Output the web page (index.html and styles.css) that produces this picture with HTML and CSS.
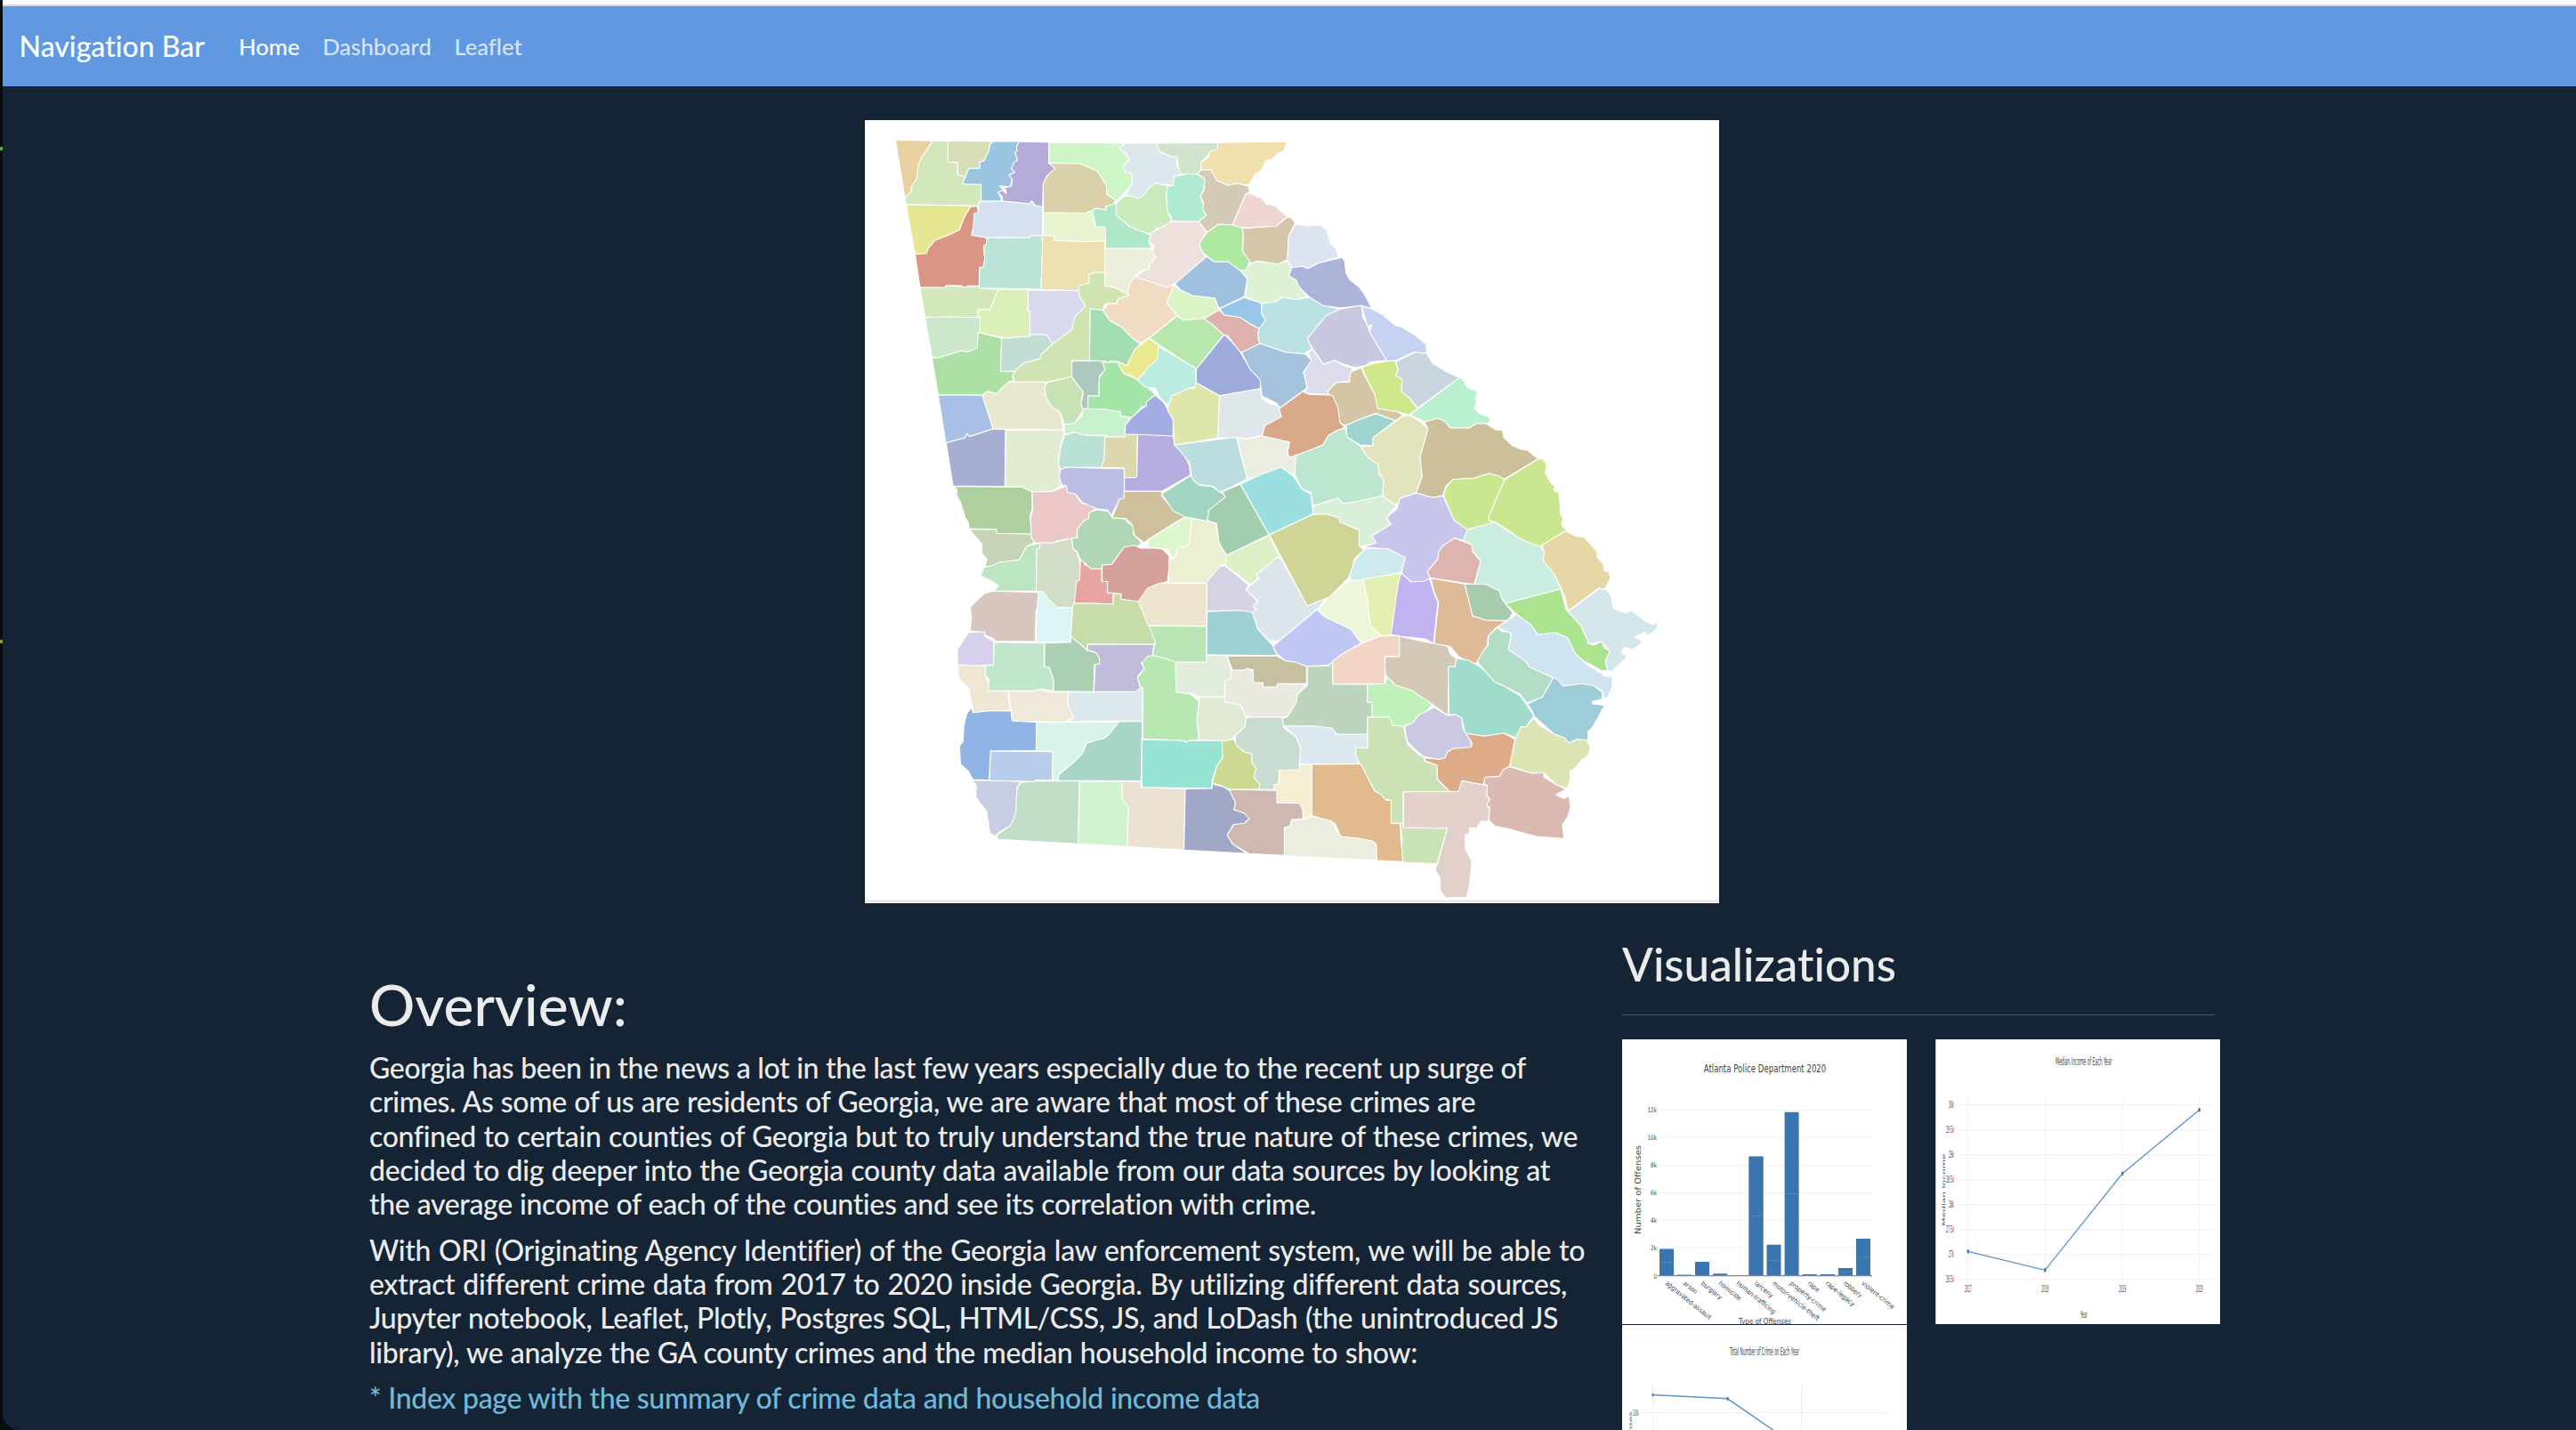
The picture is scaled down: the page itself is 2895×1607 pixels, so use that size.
FILE: index.html
```html
<!DOCTYPE html>
<html lang="en">
<head>
<meta charset="utf-8">
<title>Georgia Crime Data</title>
<link rel="stylesheet" href="styles.css">
</head>
<body>
<div class="edge"><i class="mark mark-a"></i><i class="mark mark-b"></i></div>
<div class="page">
<nav class="navbar">
  <a class="brand">Navigation Bar</a>
  <a class="nav-link active">Home</a>
  <a class="nav-link">Dashboard</a>
  <a class="nav-link">Leaflet</a>
</nav>
<figure class="map">
<svg width="960" height="880" viewBox="972 135 960 880" role="img" aria-label="Counties of Georgia">
<path d="M972 1012.5H1932" stroke="#dcdcdc" stroke-width="1.4"/>
<g class="counties">
<g transform="translate(970 130) scale(.33333)">
<path fill="#e8d09f" d="M109 82 235 85 198 140 187 165 185 205 175 230 163 240 163 255 141 277z"/>
<path fill="#d2e8bc" d="M235 85 286 85 286 156 319 158 319 199 345 201 335 230 397 232 397 288 391 290 391 304 235 301 145 299 141 277 163 255 163 240 181 212 186 165 198 140z"/>
<path fill="#d5deb4" d="M286 85 439 87 428 96 424 120 416 133 409 152 394 155 393 178 357 178 345 206 319 199 319 158 286 156z"/>
<path fill="#9ac4df" d="M439 87 526 87 517 105 520 120 512 125 521 152 508 165 512 190 492 200 502 212 497 240 460 237 483 262 455 258 470 288 398 288 398 232 335 230 357 178 393 178 394 155 409 152 416 133 424 120 428 96z"/>
<path fill="#b4abd9" d="M526 87 627 90 626 158 647 178 632 198 620 203 607 230 605 308 580 302 570 288 562 298 530 294 470 288 470 275 455 258 470 252 483 262 480 248 460 237 480 242 500 238 503 215 492 200 512 190 500 180 508 158 521 150 512 125 520 118 517 105z"/>
<path fill="#cef5c6" d="M627 90 886 93 864 110 890 132 898 150 882 160 878 175 884 192 907 194 906 230 852 292 822 265 820 235 792 190 775 180 732 162 626 158z"/>
<path fill="#dad1ab" d="M626 160 732 162 775 180 792 190 820 235 822 265 850 285 845 300 818 306 818 318 785 312 772 322 758 324 755 329 608 327 607 230 620 203 647 178z"/>
<path fill="#dde8ec" d="M886 93 987 93 1002 122 1045 140 1057 135 1058 165 1072 190 1072 197 1050 205 1045 235 987 228 963 245 957 262 940 275 920 280 905 270 880 278 906 230 907 194 884 192 878 168 898 150 890 132 864 110z"/>
<path fill="#c9ebbb" d="M853 295 880 272 905 270 925 280 945 270 963 243 987 228 1030 236 1022 265 1024 300 1030 335 1040 350 1035 362 1010 380 990 378 970 402 900 375 853 335z"/>
<path fill="#afe8c8" d="M772 320 785 312 818 318 820 305 853 295 853 335 900 375 970 402 963 428 975 447 817 448 817 376 785 375z"/>
<path fill="#e8f4cf" d="M608 328 758 328 758 323 770 322 785 375 817 376 817 422 745 425 643 420 643 404 606 404z"/>
<path fill="#d6e1f0" d="M391 290 470 288 530 294 562 298 567 287 580 304 605 308 605 404 563 404 563 411 445 410 440 414 415 411 365 403 372 375 363 372 374 362 374 330 388 325z"/>
<path fill="#e6e793" d="M145 300 363 304 335 355 325 385 290 402 243 420 218 450 213 465 175 466z"/>
<path fill="#da9584" d="M363 306 385 306 388 326 374 330 372 370 365 403 417 412 415 435 407 437 410 485 405 510 393 512 391 574 350 574 350 579 335 579 333 573 280 572 277 579 192 579 175 467 213 465 218 450 243 420 290 402 325 385 340 345z"/>
<path fill="#bbe4d8" d="M417 412 563 411 563 404 603 404 605 436 600 585 391 581 393 512 405 510 410 485 407 437 415 435z"/>
<path fill="#ebe0b1" d="M603 404 643 404 643 420 745 425 815 422 815 529 778 529 775 536 761 538 761 565 728 573 727 590 600 586 605 436z"/>
<path fill="#ecefdb" d="M815 448 975 450 980 465 993 480 975 495 970 515 935 525 918 540 900 565 892 604 850 580 815 574z"/>
<path fill="#d3e9bd" d="M192 580 277 579 280 572 350 578 391 574 391 582 456 586 428 654 388 653 388 680 302 679 209 680z"/>
<path fill="#dbefb8" d="M456 586 556 585 556 658 563 660 562 744 480 750 394 731 394 680 388 680 388 653 428 654z"/>
<path fill="#d8d9ec" d="M556 588 727 590 728 605 750 642 713 680 713 698 703 722 638 770 618 738 563 738 563 660 556 658z"/>
<path fill="#d0e4b2" d="M727 573 761 565 761 538 778 529 815 529 815 574 850 580 897 607 860 618 855 632 815 635 808 656 766 650 763 825 704 825 704 880 620 898 490 898 508 893 503 865 540 835 597 818 600 805 638 770 703 722 713 680 750 642 728 605z"/>
<path fill="#cbe8cb" d="M209 680 302 679 394 680 394 731 388 731 385 783 350 797 335 792 255 816 232 815z"/>
<path fill="#ade0a5" d="M232 817 255 816 335 792 350 797 385 783 388 731 467 750 463 862 510 862 503 880 508 893 490 898 465 928 450 938 420 928 402 942 253 940z"/>
<path fill="#c1ddd4" d="M467 750 480 750 562 744 563 738 618 738 638 770 600 805 597 818 540 835 510 862 463 862z"/>
<path fill="#f0dcc2" d="M918 542 1024 578 1050 568 1024 630 1058 675 965 748 935 768 910 752 870 712 830 690 808 660 825 632 855 635 860 618 897 605 892 590 900 562z"/>
<path fill="#a3deb0" d="M766 650 808 656 830 690 870 712 910 752 935 768 915 790 890 842 855 828 830 828 825 835 817 827 763 825z"/>
<path fill="#ebe990" d="M963 752 997 775 993 820 960 852 925 890 905 875 880 870 855 830 890 842 915 790 925 780z"/>
</g>
<g transform="translate(970 420) scale(.33333)">
<path fill="#acc8be" d="M704-43 805-43 817-15 795 10 808 15 795 20 795 75 758 75 758 118 740 118 735 100 742 65 725 40 704 12z"/>
<path fill="#a2e5a6" d="M795 75 758 75 758 118 815 120 865 128 870 142 905 148 930 125 938 112 965 105 967 90 985 70 950 38 925 20 880 0 855-40 825-37 805-40 817-15 797 10z"/>
<path fill="#e6a5a0" d="M732 640 735 625 745 630 747 645 768 648 768 657 804 659 804 700 824 701 824 738 843 740 843 776 710 772 708 737 720 700z"/>
<path fill="#d8c7c0" d="M410 740 440 733 592 737 590 785 583 800 580 902 445 902 440 893 410 880 390 870 360 866 365 830 362 785z"/>
<path fill="#dcf6f6" d="M592 735 608 735 655 788 707 790 697 903 583 905 585 800z"/>
<path fill="#c7dca8" d="M708 773 843 776 845 740 870 742 870 760 928 768 955 820 970 850 985 890 985 913 757 912 755 932 700 885z"/>
<path fill="#d1ddc6" d="M597 570 640 570 703 555 708 590 720 600 732 640 730 695 720 700 712 770 706 788 655 788 625 760 608 735 583 733 585 590 595 588z"/>
<path fill="#bce6c1" d="M597 570 595 588 585 590 583 733 440 733 457 715 430 697 395 680 408 653 450 635 525 628 550 582z"/>
<path fill="#c6d3b6" d="M357 524 450 525 450 538 567 540 568 552 578 570 550 582 535 612 525 628 460 635 425 650 410 648 418 625 400 605 400 573z"/>
<path fill="#add09e" d="M303 380 535 382 570 397 570 455 563 480 567 540 450 538 450 525 357 522 355 500 345 487 335 455 328 432 315 410 317 390z"/>
<path fill="#ecc9c8" d="M570 398 640 396 685 378 690 400 715 405 735 435 790 453 762 470 760 488 745 495 722 525 720 553 660 562 640 570 578 570 567 550 565 480 572 460z"/>
<path fill="#b1d6b5" d="M790 458 830 465 840 485 885 490 890 500 912 515 910 540 940 570 925 582 880 585 838 643 806 645 804 658 768 657 732 625 722 600 708 590 703 555 722 553 722 525 745 495 760 488 762 468z"/>
<path fill="#d6a09b" d="M880 585 915 578 935 588 985 588 1010 592 1032 615 1032 645 1027 700 1000 708 985 718 928 768 870 760 870 742 824 738 824 701 806 700 806 645 838 643z"/>
<path fill="#a8c0e6" d="M253 71 402 73 438 185 355 212 350 202 345 215 279 233z"/>
<path fill="#a7aed3" d="M280 233 345 215 350 202 358 212 440 185 480 188 478 380 303 378z"/>
<path fill="#e8e8cf" d="M402 73 420 60 450 68 465 50 490 28 613 28 620 40 613 75 635 110 665 130 675 190 480 187 438 185z"/>
<path fill="#c7e2b4" d="M620 30 704 10 725 40 742 60 735 95 740 125 712 168 678 170 665 130 635 110 617 80 612 50z"/>
<path fill="#c7f0cd" d="M740 118 815 120 867 128 870 145 900 150 883 175 883 213 825 213 820 207 745 207 715 197 680 205 678 172 712 168 738 140z"/>
<path fill="#e2ecd2" d="M482 190 675 190 678 205 668 230 658 295 665 325 672 375 638 396 570 398 535 382 478 380z"/>
<path fill="#bbe0d4" d="M680 207 715 197 745 207 815 210 813 290 802 315 680 316 667 325 658 300 668 240z"/>
<path fill="#dcd7ac" d="M815 212 883 213 883 204 925 204 923 345 917 350 881 350 881 318 802 316 813 290z"/>
<path fill="#bbbde3" d="M665 325 682 316 880 320 880 420 865 422 837 478 825 460 790 455 740 435 715 405 690 400 685 378 670 375 662 350z"/>
<path fill="#b5ade0" d="M926 204 1030 203 1045 210 1050 240 1085 275 1100 310 1103 342 1007 397 881 396 881 350 917 350 923 345z"/>
<path fill="#cec09b" d="M881 397 1007 397 1007 412 1050 462 1085 482 1030 515 960 560 947 570 915 545 908 510 885 488 840 485 865 422 880 420z"/>
</g>
<g transform="translate(1290 130) scale(.33333)">
<path fill="#eee0dc" d="M40 380 80 357 172 357 198 393 175 430 180 452 195 477 92 566 64 578-42 543-20 526 5 515 5 500 27 480 15 460 20 440 5 420 10 395z"/>
<path fill="#d0e4cb" d="M27 93 235 91 235 115 210 120 205 132 180 155 178 185 165 197 112 197 105 183 97 135 85 140 42 122z"/>
<path fill="#efe0ad" d="M235 91 470 87 458 120 442 125 420 145 398 152 383 183 360 200 350 220 337 235 300 228 270 235 232 218 205 182 178 182 180 158 205 140 210 120 235 115z"/>
<path fill="#b0ead0" d="M90 205 135 196 165 197 192 213 188 250 177 272 188 300 185 315 197 335 172 357 80 355 80 340 66 325 64 240 85 235z"/>
<path fill="#d4cbb6" d="M168 196 180 183 212 183 232 218 270 235 300 228 340 238 343 258 330 265 285 368 238 366 200 393 172 357 197 335 185 315 188 295 177 272 190 250 192 213z"/>
<path fill="#f0d6d3" d="M343 262 385 280 400 298 435 305 440 315 470 340 432 373 315 378 285 370 330 265z"/>
<path fill="#afe8a0" d="M200 393 238 366 285 368 315 378 322 395 318 455 345 490 330 520 312 523 272 493 225 493 185 462 173 432z"/>
<path fill="#d4c6a8" d="M318 380 432 373 470 342 485 345 497 362 475 405 470 487 437 500 370 490 348 498 320 458 322 395z"/>
<path fill="#dce3f1" d="M497 365 540 372 582 368 603 385 615 430 635 450 643 478 575 497 540 515 520 508 485 512 470 487 475 405z"/>
<path fill="#aab5d9" d="M485 512 520 508 540 515 575 497 655 478 664 490 668 530 680 552 715 580 735 610 755 650 720 640 650 648 590 640 545 612 510 578 500 555 475 540z"/>
<path fill="#ddf1d5" d="M312 523 330 520 348 498 370 490 437 500 470 488 485 512 475 540 500 555 510 578 535 608 500 620 455 612 430 628 385 632 325 610 335 570 333 545z"/>
<path fill="#a0c0df" d="M92 566 198 475 225 493 272 493 312 523 335 550 325 610 240 650 225 615 150 607 110 588z"/>
<path fill="#dbf4c3" d="M88 570 110 588 150 607 225 615 240 655 190 684 120 690 98 672 64 630z"/>
<path fill="#98c6e8" d="M242 650 325 613 383 632 383 665 397 690 375 718 345 702 310 680 258 672z"/>
<path fill="#deb0ae" d="M240 655 258 672 310 680 345 702 375 718 370 740 377 768 345 790 312 798 290 770 270 742 245 737 215 702 188 686z"/>
<path fill="#b7e7ad" d="M98 675 120 690 188 684 215 702 255 738 163 855 125 830 5 750z"/>
<path fill="#bae1e4" d="M385 634 430 628 455 612 500 620 545 612 590 640 648 652 600 675 572 710 538 752 555 785 525 803 465 798 378 768 370 740 375 718 397 690 383 665z"/>
<path fill="#c9c8e1" d="M648 652 720 640 725 680 740 705 748 730 805 825 750 830 740 840 700 850 660 838 630 825 592 838 555 785 538 752 572 710 600 675z"/>
<path fill="#c6d2f1" d="M722 643 755 652 790 670 835 708 855 712 900 740 938 770 940 800 895 798 830 828 805 825 748 730 755 705 740 710z"/>
<path fill="#bcebe0" d="M35 777 125 830 160 850 163 912 135 920 80 948 80 965 68 978 40 950 25 918-8 915-35 893 0 850 33 820z"/>
<path fill="#9eaad9" d="M258 738 290 770 312 798 345 855 382 890 378 920 242 944 163 900 163 855z"/>
<path fill="#a5c2dc" d="M316 798 378 768 465 798 530 803 552 825 525 865 537 918 443 986 435 970 385 945 378 890 345 855z"/>
<path fill="#dcdcec" d="M555 787 592 838 630 825 665 845 690 850 680 893 635 900 605 940 530 935 537 915 525 865 552 825 540 800z"/>
<path fill="#cee88b" d="M722 850 760 835 830 825 845 855 835 875 858 890 855 925 880 950 910 988 880 1008 840 998 775 990 765 940 740 890z"/>
<path fill="#c8d5df" d="M835 830 900 798 940 802 960 835 1010 865 1050 883 910 985 880 950 855 930 858 890 835 875 845 855z"/>
</g>
<g transform="translate(1290 420) scale(.33333)">
<path fill="#d4c5a5" d="M720-20 728 0 765 70 775 118 840 128 860 140 835 158 768 133 710 155 665 175 648 165 640 110 605 60 635 30 680 28 683-5z"/>
<path fill="#a4ade2" d="M-5 95 25 72 55 98 70 125 85 155 85 210-77 203-75 172-55 148-20 118-5 108z"/>
<path fill="#dfe6ac" d="M163 30 242 74 236 217 90 240 85 155 65 120 80 75 135 50 160 48z"/>
<path fill="#e0e7eb" d="M242 74 378 50 385 85 410 100 443 110 450 145 395 175 385 210 330 218 236 215z"/>
<path fill="#d9a88a" d="M522 60 545 70 622 73 640 110 648 165 665 180 610 207 590 240 520 270 478 283 470 265 475 230 385 210 395 175 450 145 443 118z"/>
<path fill="#bcdddf" d="M92 240 298 214 335 355 245 400 220 380 165 372 150 355 140 300z"/>
<path fill="#ecede1" d="M300 214 340 220 385 210 478 230 470 270 478 283 503 272 500 320 490 340 450 318 385 340 335 355z"/>
<path fill="#a0d5cf" d="M668 175 710 155 768 135 835 158 760 215 758 243 715 240 672 213z"/>
<path fill="#e3e4bd" d="M862 142 885 142 920 162 945 185 918 280 925 345 905 402 855 418 850 440 820 438 792 412 795 360 778 330 775 305 745 285 718 247 760 243 760 215z"/>
<path fill="#bce6d0" d="M665 183 672 213 715 243 745 285 775 305 780 340 795 360 790 412 710 430 660 438 640 420 557 445 550 400 520 390 495 340 500 275 545 258 590 240 610 207 640 190z"/>
<path fill="#9bdfe0" d="M312 372 385 338 450 315 490 345 520 390 550 405 557 473 408 543z"/>
<path fill="#a1d4c1" d="M47 405 145 343 155 360 175 376 215 380 245 400 262 410 250 430 205 460 200 497 125 482 85 462z"/>
<path fill="#a2cdae" d="M250 398 312 373 408 543 265 612 240 570 232 505 202 495 205 460 262 415z"/>
<path fill="#dcf6cd" d="M125 484 148 487 140 575 118 590 98 592 95 615 80 618 70 592 0 585 0 560z"/>
<path fill="#ecefd0" d="M148 487 228 503 240 570 265 612 268 640 245 648 198 705 70 704 72 630 97 615 97 592 140 575z"/>
<path fill="#daefd9" d="M557 447 640 420 660 438 710 430 792 412 838 445 805 485 822 508 755 545 770 572 712 583 712 525 645 500 640 485 605 473 557 473z"/>
<path fill="#d0d497" d="M410 543 555 475 605 473 645 487 648 500 712 527 712 578 728 595 695 625 690 660 675 690 610 755 537 783z"/>
<path fill="#ddf0c6" d="M265 612 408 545 445 617 365 678 372 690 345 710 262 648z"/>
<path fill="#cdebef" d="M735 588 810 590 868 620 855 670 725 695 685 697 680 680 700 625z"/>
<path fill="#d5d2e4" d="M198 702 245 648 262 648 340 712 330 728 370 768 355 782 365 798 350 808 310 798 198 800z"/>
<path fill="#dce6ea" d="M437 618 450 625 537 783 605 755 570 795 445 900 410 900 370 860 352 805 365 795 355 782 372 768 330 728 375 690 365 678z"/>
<path fill="#e4f0b2" d="M725 693 855 671 820 880 790 885 750 850 735 740z"/>
<path fill="#ebf6da" d="M575 793 610 755 680 697 725 697 740 760 750 850 785 883 725 908 705 890 685 862 640 840 600 822z"/>
<path fill="#c1b3ef" d="M855 671 885 700 950 690 965 740 978 770 963 910 940 895 850 885 820 880 845 700z"/>
<path fill="#ece4cd" d="M40 706 198 706 198 850 0 848-10 820-32 768 0 722z"/>
<path fill="#b9e4b6" d="M5 850 197 852 197 973 93 973 65 962 15 950 25 905z"/>
</g>
<g transform="translate(1600 420) scale(.33333)">
<path fill="#b9f0d0" d="M120 13 135 22 145 45 182 60 175 80 178 100 170 115 190 135 220 145 225 160 215 168 180 168 152 183 90 183 70 160 48 150 2 162-45 138z"/>
<path fill="#ccc09a" d="M2 163 48 150 70 160 90 183 152 183 180 168 210 168 245 190 265 190 270 215 300 243 330 255 350 258 385 287 272 355 220 336 170 352 100 356 75 378 65 410 30 418-25 402-5 345-12 280 15 185z"/>
<path fill="#c9e78e" d="M387 287 400 287 415 305 410 335 430 370 442 378 440 395 455 400 460 440 460 470 470 490 465 508 480 528 400 577 395 583 360 572 320 553 290 530 240 500 220 495 220 480 272 358z"/>
<path fill="#c9e78e" d="M272 356 250 343 220 336 170 352 100 356 78 378 67 410 103 495 145 526 240 502 220 495 220 480z"/>
<path fill="#e5d7a6" d="M400 577 480 530 515 548 540 550 585 600 585 620 605 640 610 665 625 668 630 690 610 725 590 723 487 800 475 750 455 705 402 630 407 605z"/>
<path fill="#c9eee0" d="M147 526 240 500 260 515 320 553 360 572 395 583 407 605 402 630 440 675 462 725 275 774 262 755 250 730 210 710 172 710 192 632 160 590 162 577 133 562z"/>
<path fill="#deb4af" d="M105 554 162 577 165 600 192 632 170 710 22 688 12 668 47 625 50 600 68 577z"/>
<path fill="#c9c6ed" d="M-80 420-25 402 30 418 65 412 103 495 147 526 133 562 105 554 68 577 50 600 47 625 12 668 22 690 0 700-42 702-75 672-62 620-120 590-205 585-160 570-175 547-110 508-125 485-90 455z"/>
<path fill="#a6ccad" d="M138 709 210 710 255 732 262 755 275 775 300 805 285 832 210 831 165 817z"/>
<path fill="#dfba99" d="M25 690 138 709 165 817 210 831 280 834 245 855 217 885 215 915 195 945 180 975 165 978 120 955 90 920 35 910 50 770 35 735z"/>
<path fill="#d3e6ea" d="M487 802 592 724 618 728 633 750 638 790 680 807 700 798 745 833 775 845 788 836 788 858 760 882 745 872 712 887 740 905 705 930 675 922 668 940 685 955 635 1005 620 1000 612 970 627 935 600 902 560 910 550 895 530 850z"/>
<path fill="#abe48f" d="M275 775 462 726 480 795 530 850 550 895 555 910 575 915 600 902 610 925 627 935 612 970 620 1000 600 1002 565 980 530 965 512 945 485 890 445 873 385 880 360 845 315 812z"/>
</g>
<g transform="translate(970 710) scale(.33333)">
<path fill="#ebe1d0" d="M873 505 937 503 937 524 1086 530 1082 736 890 724 895 595 873 560z"/>
<path fill="#cff4cf" d="M731 505 873 505 873 560 895 595 890 724 724 715z"/>
<path fill="#c1dec6" d="M533 508 580 503 729 503 724 715 455 700 450 685 495 655 508 625 520 525z"/>
<path fill="#c9cde2" d="M370 500 425 502 533 505 518 525 515 605 508 630 495 655 455 678 445 690 427 678 417 605 392 575 380 555 382 520z"/>
<path fill="#90b4e4" d="M365 256 372 272 420 266 498 266 503 300 585 305 585 400 430 402 425 500 370 498 355 470 328 445 325 385 337 370 340 315 350 275z"/>
<path fill="#b8ccec" d="M430 402 640 404 637 500 580 500 578 505 426 501z"/>
<path fill="#d8f2ec" d="M585 305 863 305 830 345 815 358 755 378 738 412 712 438 660 480 655 502 638 500 640 404 583 400z"/>
<path fill="#a7d5c8" d="M863 303 941 302 937 503 657 501 662 480 712 438 738 412 755 375 815 358 830 345z"/>
<path fill="#efe6d3" d="M320 112 412 112 413 150 425 180 422 199 488 201 495 262 498 266 420 266 370 272 358 195 322 155z"/>
<path fill="#f0e8d8" d="M490 201 578 200 585 192 635 203 690 204 690 245 710 290 690 297 680 304 640 304 503 300 498 260z"/>
<path fill="#dbe8ec" d="M692 204 915 202 930 190 943 190 943 300 690 303 710 290 690 245z"/>
<path fill="#d8d1ee" d="M355 2 410 0 410 15 442 33 440 112 380 115 318 110 318 60z"/>
<path fill="#c0e7cb" d="M442 35 610 38 610 117 628 120 645 170 640 199 600 192 580 199 422 199 425 160 413 150 413 114 440 112z"/>
<path fill="#aacfb2" d="M612 38 700 35 700 15 755 62 785 70 797 90 797 108 780 110 777 202 642 200 643 165 628 120 612 117z"/>
<path fill="#c1bbdc" d="M757 42 980 43 975 85 938 105 948 125 925 150 935 190 918 202 778 202 783 110 797 108 797 90 785 70 757 62z"/>
</g>
<g transform="translate(1290 710) scale(.33333)">
<path fill="#b8e8b1" d="M0 82 20 80 60 90 93 103 95 203 145 210 172 235 165 300 172 365 140 366 135 372 115 366-17 361-17 190-25 185-35 155-12 125-20 105z"/>
<path fill="#bfc8f3" d="M422 48 570-75 600-48 640-30 685-8 705 20 720 38 655 75 625 100 610 112 530 117 500 103 465 98 435 75z"/>
<path fill="#d3c8b5" d="M848 15 925 32 1010 48 1020 75 1040 90 1035 118 1013 118 1013 283 960 245 900 205 835 180 810 157 800 140 800 83 848 83z"/>
<path fill="#f2d5c5" d="M722 38 785 15 848 13 848 83 800 83 798 175 623 177 623 100 655 75z"/>
<path fill="#9fd0d4" d="M200-68 310-73 352-65 370-10 422 48 435 80 198 77z"/>
<path fill="#e2ecdc" d="M197 77 268 82 282 130 280 160 262 165 258 218 172 220 145 208 95 203 95 103 197 103z"/>
<path fill="#c6c0a0" d="M268 82 435 81 465 98 500 103 535 117 535 175 437 175 435 187 388 187 388 172 355 172 355 130 345 125 325 130 285 130z"/>
<path fill="#e9e9df" d="M282 130 325 130 335 122 345 130 355 130 355 172 388 172 388 187 435 187 437 175 535 178 505 210 500 240 470 287 345 288 328 282 315 250 258 235 262 165 280 160z"/>
<path fill="#bdd5bd" d="M537 117 610 115 623 100 623 177 740 177 740 238 757 240 757 287 741 288 740 346 638 346 620 325 457 316 453 292 470 287 500 240 505 210 537 180z"/>
<path fill="#e0e9d2" d="M175 220 258 220 260 237 310 245 330 285 345 290 328 295 328 320 295 350 275 367 173 365 167 290z"/>
<path fill="#dbe9ee" d="M458 318 558 317 620 325 638 346 740 346 740 392 702 392 702 420 715 445 512 446 515 395 500 355z"/>
<path fill="#c8dcd2" d="M330 292 345 288 452 288 460 325 500 355 515 395 510 465 443 467 440 515 425 532 375 532 355 490 365 460 350 440 350 412 325 405 295 380 295 350 328 320z"/>
<path fill="#97e4d4" d="M-20 364 110 366 130 372 140 366 250 367 252 425 232 455 217 500 215 528-20 524z"/>
<path fill="#ccd991" d="M250 370 290 362 300 385 325 405 350 412 350 440 365 460 357 490 378 515 375 530 275 532 240 516 217 510 232 455 252 425z"/>
<path fill="#c0f1bb" d="M741 177 800 175 803 155 812 157 835 180 890 198 960 245 920 288 895 306 860 317 820 315 812 288 757 287 755 238 740 238z"/>
<path fill="#cae2b5" d="M741 287 815 288 825 316 862 318 875 378 915 415 932 423 932 435 975 450 975 498 1018 538 861 540 861 646 820 645 820 568 800 565 765 535 701 420 702 390 741 392z"/>
<path fill="#c9e3b7" d="M851 646 861 646 861 660 1010 662 975 782 861 777 853 760 858 700z"/>
<path fill="#e1ba8d" d="M553 447 718 446 765 538 785 548 803 568 820 568 820 646 851 647 853 700 860 775 772 770 770 715 755 705 710 697 650 690 630 645 553 620z"/>
<path fill="#eaede0" d="M460 755 460 660 478 655 487 632 530 632 553 620 620 638 632 665 650 690 710 697 755 705 770 715 770 770z"/>
<path fill="#f5eed0" d="M553 447 553 620 530 630 520 595 512 578 435 577 435 535 425 532 425 515 443 512 443 467 512 465 512 447z"/>
<path fill="#cfb8b2" d="M273 532 435 535 435 577 512 578 522 600 523 630 485 633 478 655 460 660 460 754 340 748 285 715 267 685 290 650 340 630 325 612 290 600 295 575z"/>
<path fill="#a1a8c7" d="M126 530 217 528 218 513 255 523 275 535 295 575 290 600 325 612 342 630 325 645 288 650 267 685 285 715 333 747 122 736z"/>
</g>
<g transform="translate(1600 710) scale(.33333)">
<path fill="#cfe3f1" d="M248-15 312-58 360-25 385 10 445 3 485 20 512 75 530 90 560 118 595 137 610 150 635 150 636 185 620 222 606 222 603 200 575 183 535 175 470 183 437 155 355 118 345 100 285 60 295 5z"/>
<path fill="#b2dec7" d="M217 15 248-15 265 0 285 0 295 10 285 60 345 100 355 118 437 155 400 220 348 240 325 210 265 180 240 170 205 130 180 100 200 65 217 45z"/>
<path fill="#9dcdd8" d="M437 155 450 160 470 183 535 175 575 183 603 205 600 228 567 235 570 243 610 248 590 285 567 325 553 335 555 375 520 362 490 375 475 358 440 345 372 285 365 265 350 243 400 220z"/>
<path fill="#a0dccb" d="M110 90 150 95 185 115 205 130 240 170 265 180 325 215 350 250 372 283 345 320 328 320 325 342 313 357 270 342 205 352 140 343 128 290 105 278 85 280 83 118 105 118z"/>
<path fill="#dce4b4" d="M370 290 390 315 440 345 475 358 490 375 515 362 550 365 562 390 555 415 530 435 510 460 493 470 495 495 485 528 450 517 425 495 405 475 365 478 290 452 310 357 328 320 347 320z"/>
<path fill="#dab9b1" d="M290 455 365 478 405 475 405 490 450 517 480 530 445 550 475 563 490 552 495 590 485 625 468 650 473 697 380 690 290 665 240 655 220 635 222 590 210 585 222 565 212 550 215 518 203 512 205 490 255 488 268 465z"/>
<path fill="#deab88" d="M143 343 205 352 270 342 308 362 300 400 290 452 268 465 255 487 207 490 200 516 130 502 118 538 88 538 47 498 45 450 5 435 5 425 55 430 80 405 100 393 160 388 163 375z"/>
<path fill="#e2d1cb" d="M128 503 215 518 212 550 222 565 212 585 222 597 218 640 195 638 185 650 180 663 155 660 155 678 140 685 140 730 162 775 155 850 145 895 75 897 55 870 55 830 38 800 47 780 80 662-68 660-68 539 118 539z"/>
<path fill="#cbc8e4" d="M35 255 83 283 105 278 128 290 132 325 163 378 155 390 100 393 80 405 72 425 50 430 0 421-25 400-55 370-65 320-35 305-15 280z"/>
</g>
</g>
</svg>
</figure>
<main class="content">
<section class="overview">
<h1>Overview:</h1>
<h4>
<span class="line" style="width:1300px">Georgia has been in the news a lot in the last few years especially due to the recent up surge of</span>
<span class="line" style="width:1243px">crimes. As some of us are residents of Georgia, we are aware that most of these crimes are</span>
<span class="line" style="width:1358px">confined to certain counties of Georgia but to truly understand the true nature of these crimes, we</span>
<span class="line" style="width:1327px">decided to dig deeper into the Georgia county data available from our data sources by looking at</span>
<span class="line" style="width:1064px">the average income of each of the counties and see its correlation with crime.</span>
</h4>
<h4>
<span class="line" style="width:1366px">With ORI (Originating Agency Identifier) of the Georgia law enforcement system, we will be able to</span>
<span class="line" style="width:1346px">extract different crime data from 2017 to 2020 inside Georgia. By utilizing different data sources,</span>
<span class="line" style="width:1336px">Jupyter notebook, Leaflet, Plotly, Postgres SQL, HTML/CSS, JS, and LoDash (the unintroduced JS</span>
<span class="line" style="width:1178px">library), we analyze the GA county crimes and the median household income to show:</span>
</h4>
<h4 class="note"><span class="line" style="width:1001px">* Index page with the summary of crime data and household income data</span></h4>
</section>
<aside class="viz">
<h2>Visualizations</h2>
<hr>
<div class="charts">
<svg class="chart" viewBox="0 0 320 320">
<g stroke="#f2f2f2"><path d="M40 79.5H281M40 110.5H281M40 141.5H281M40 172.5H281M40 203.5H281M40 234.5H281"/></g>
<g fill="#3a75af"><path d="M42 235.4h16v30h-16zM62 264.4h16v1h-16zM82 250h16v15.5h-16zM102.200 263.300h16v2h-16zM142.300 131.600h16.400v134h-16.400zM162.500 230.700h16v35h-16zM182.600 81.700h16v184h-16zM202.700 264h16v1.500h-16zM222.800 264h16v1.500h-16zM243 257h16v8.500h-16zM263 223.900h16v41.600h-16z"/></g>
<path d="M42 250.500h16M142.300 198.500h16.400M162.500 248.500h16M182.600 173.500h16M243 261.500h16M263 245h16" stroke="#5f8fbf" stroke-width=".7"/>
<path d="M40 265.700H281" stroke="#858585" stroke-width="1.200"/>
<text x="91.700" y="36.500" font-size="11.500" textLength="137.600" lengthAdjust="spacingAndGlyphs">Atlanta Police Department 2020</text>
<g font-size="7.500" text-anchor="end">
<text x="39" y="82" textLength="10.500" lengthAdjust="spacingAndGlyphs">12k</text><text x="39" y="113" textLength="10.500" lengthAdjust="spacingAndGlyphs">10k</text><text x="39" y="144" textLength="7" lengthAdjust="spacingAndGlyphs">8k</text><text x="39" y="175" textLength="7" lengthAdjust="spacingAndGlyphs">6k</text><text x="39" y="206" textLength="7" lengthAdjust="spacingAndGlyphs">4k</text><text x="39" y="237" textLength="7" lengthAdjust="spacingAndGlyphs">2k</text><text x="39" y="268.500" textLength="3.500" lengthAdjust="spacingAndGlyphs">0</text>
</g>
<text transform="translate(21 219) rotate(-90)" font-size="8" textLength="100" lengthAdjust="spacingAndGlyphs">Number of Offenses</text>
<g font-size="7.600">
<text transform="translate(48 275) rotate(39)" textLength="64" lengthAdjust="spacingAndGlyphs">aggravated-assault</text>
<text transform="translate(68 275) rotate(39)" textLength="18" lengthAdjust="spacingAndGlyphs">arson</text>
<text transform="translate(88 275) rotate(39)" textLength="28" lengthAdjust="spacingAndGlyphs">burglary</text>
<text transform="translate(108 275) rotate(39)" textLength="30" lengthAdjust="spacingAndGlyphs">homicide</text>
<text transform="translate(128 275) rotate(39)" textLength="54" lengthAdjust="spacingAndGlyphs">human-trafficing</text>
<text transform="translate(148 275) rotate(39)" textLength="25" lengthAdjust="spacingAndGlyphs">larceny</text>
<text transform="translate(168 275) rotate(39)" textLength="66" lengthAdjust="spacingAndGlyphs">motor-vehicle-theft</text>
<text transform="translate(188 275) rotate(39)" textLength="50" lengthAdjust="spacingAndGlyphs">property-crime</text>
<text transform="translate(208 275) rotate(39)" textLength="15" lengthAdjust="spacingAndGlyphs">rape</text>
<text transform="translate(228 275) rotate(39)" textLength="40" lengthAdjust="spacingAndGlyphs">rape-legacy</text>
<text transform="translate(248 275) rotate(39)" textLength="25" lengthAdjust="spacingAndGlyphs">robbery</text>
<text transform="translate(268.500 275) rotate(39)" textLength="45" lengthAdjust="spacingAndGlyphs">violent-crime</text>
</g>
<text x="131" y="319.500" font-size="8.500" textLength="59" lengthAdjust="spacingAndGlyphs">Type of Offenses</text>
</svg>
<svg class="chart" viewBox="0 0 320 320">
<path d="M.5 0V320" stroke="#b9bec4"/>
<g stroke="#f2f2f2"><path d="M23 73.500H312M23 101.500H312M23 129.500H312M23 157.500H312M23 185.500H312M23 213.500H312M23 241.500H312M23 269.500H312M36.500 66V272M123.500 66V272M210.500 66V272M296.500 66V272"/></g>
<path d="M36.700 238.300 123.300 259.300 210.300 150.800 296.700 79.200" fill="none" stroke="#5b94cb" stroke-width="1.300"/>
<g fill="#3a75af"><ellipse cx="36.700" cy="238.300" rx="1.200" ry="2.500"/><ellipse cx="123.300" cy="259.300" rx="1.200" ry="2.500"/><ellipse cx="210.300" cy="150.800" rx="1.200" ry="2.500"/><ellipse cx="296.700" cy="79.200" rx="1.200" ry="2.500"/></g>
<text x="135" y="28.500" font-size="13" textLength="63.500" lengthAdjust="spacingAndGlyphs">Median Income of Each Year</text>
<g font-size="10">
<text x="15" y="77" textLength="6" lengthAdjust="spacingAndGlyphs">30k</text><text x="12" y="105" textLength="9" lengthAdjust="spacingAndGlyphs">29.5k</text><text x="15" y="133" textLength="6" lengthAdjust="spacingAndGlyphs">29k</text><text x="12" y="161" textLength="9" lengthAdjust="spacingAndGlyphs">28.5k</text><text x="15" y="189" textLength="6" lengthAdjust="spacingAndGlyphs">28k</text><text x="12" y="217" textLength="9" lengthAdjust="spacingAndGlyphs">27.5k</text><text x="15" y="245" textLength="6" lengthAdjust="spacingAndGlyphs">27k</text><text x="12" y="273" textLength="9" lengthAdjust="spacingAndGlyphs">26.5k</text>
<text x="32.700" y="283.500" textLength="8" lengthAdjust="spacingAndGlyphs">2017</text><text x="119.300" y="283.500" textLength="8" lengthAdjust="spacingAndGlyphs">2018</text><text x="206.300" y="283.500" textLength="8" lengthAdjust="spacingAndGlyphs">2019</text><text x="292.700" y="283.500" textLength="8" lengthAdjust="spacingAndGlyphs">2020</text>
<text x="163" y="312.500" textLength="8" lengthAdjust="spacingAndGlyphs">Year</text>
</g>
<text transform="translate(11 209.500) rotate(-90)" font-size="4.500" textLength="81" lengthAdjust="spacingAndGlyphs">Median Income</text>
</svg>
<svg class="chart" viewBox="0 0 320 320">
<path d="M20 98.500H300M34.500 67V290M201.500 67V290" stroke="#f0f0f0"/>
<path d="M34.500 78.500 118.500 82.800 169 117.500 201.500 141" fill="none" stroke="#5b94cb" stroke-width="1.400"/>
<g fill="#3a75af"><ellipse cx="34.500" cy="78.500" rx="1" ry="2"/><ellipse cx="118.500" cy="82.800" rx="1.200" ry="2"/></g>
<text x="121" y="33.500" font-size="12.500" textLength="78" lengthAdjust="spacingAndGlyphs">Total Number of Crime on Each Year</text>
<text x="12" y="101.500" font-size="8" textLength="7" lengthAdjust="spacingAndGlyphs">100k</text>
<text transform="translate(11 200) rotate(-90)" font-size="4.500" textLength="103" lengthAdjust="spacingAndGlyphs">Number of Offenses</text>
</svg>
</div>
</aside>
</main>
</div>
</body>
</html>
```

FILE: styles.css
```css
html {
  font-size: 25.6px;
  overflow: hidden;
}
body {
  margin: 0;
  height: 1607px;
  overflow: hidden;
  display: flex;
  background: #0b0c0f;
  color: #ebebeb;
  font-family: Lato, "Liberation Sans", sans-serif;
  font-weight: 500;
}
.edge {
  width: 3px;
  flex: none;
  padding-top: 165px;
  box-sizing: border-box;
}
.mark {
  display: block;
  height: 4px;
  background: #5fa854;
}
.mark-b {
  margin-top: 550px;
  background: #8a9a3c;
}
.page {
  flex: 1;
  min-width: 0;
  height: 1607px;
  box-sizing: border-box;
  overflow: hidden;
  background: #142434;
  border-top: 5px solid #fff;
  border-radius: 0 0 0 18px;
}
.navbar {
  height: 92px;
  box-sizing: border-box;
  border-top: 2px solid #d9dadc;
  padding: 0 18.6px;
  display: flex;
  align-items: center;
  background: #6098e2;
  font-variant-ligatures: none;
}
.brand {
  font-size: 32px;
  line-height: 1.2;
  color: #fff;
  margin-right: 25.6px;
}
.nav-link {
  padding: 0 12.8px;
  line-height: 1.2;
  color: rgba(255, 255, 255, .75);
}
.nav-link.active {
  color: #fff;
}
.map {
  margin: 38px 0 0 969px;
  width: 960px;
  height: 880px;
  background: #fff;
}
.map svg {
  display: block;
}
.counties path {
  stroke: #fff;
  stroke-width: 3.2;
  stroke-linejoin: round;
}
.content {
  display: grid;
  grid-template-columns: 1408px 680px;
  align-items: start;
  margin: 37.8px 0 0 412px;
}
h1, h2, h4 {
  margin: 0 0 12.8px;
  font-weight: 500;
  line-height: 1.2;
  font-variant-ligatures: none;
}
h1 {
  font-size: 64px;
}
h2 {
  font-size: 51.2px;
  margin: 0;
}
h4 {
  font-size: 32px;
}
.line {
  display: block;
  height: 38.4px;
  letter-spacing: -.35px;
  word-spacing: -3px;
  text-align: justify;
  text-align-last: justify;
}
.overview {
  padding-top: 38.4px;
}
.note {
  color: #70b9d9;
}
hr {
  width: 666px;
  height: 1px;
  margin: 25.6px 0 27px;
  border: 0;
  background: #4a5763;
}
.charts {
  display: grid;
  grid-template-columns: 320px 320px;
  column-gap: 32px;
  row-gap: 1px;
}
.chart {
  display: block;
  width: 320px;
  height: 320px;
  background: #fff;
  font-family: "DejaVu Sans", sans-serif;
  font-weight: 400;
  fill: #444;
}
```
